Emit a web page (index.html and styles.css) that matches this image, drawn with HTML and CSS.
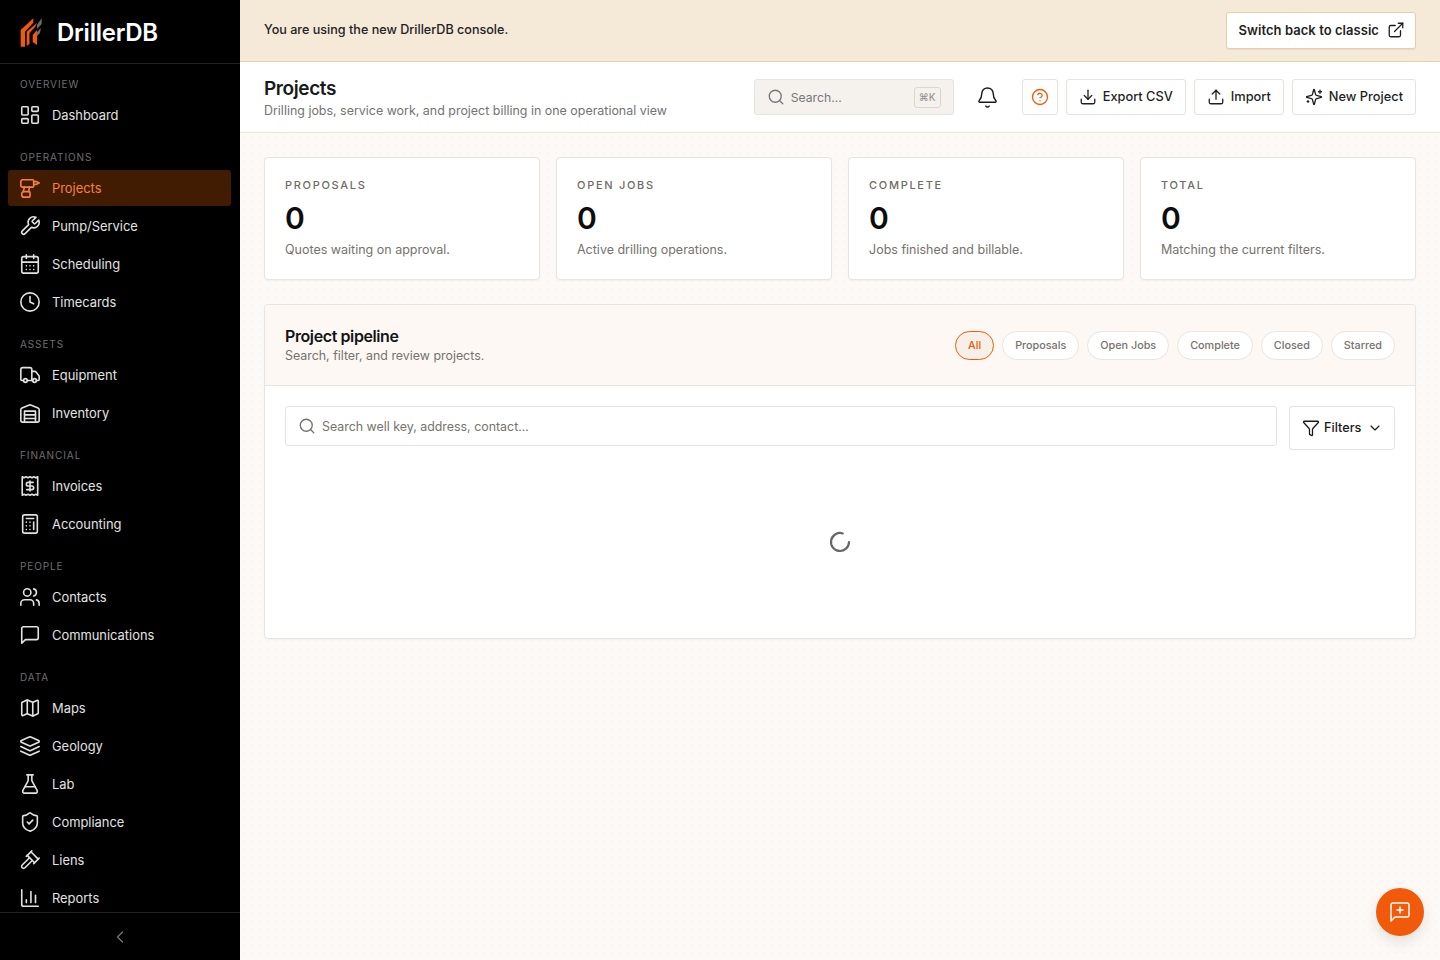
FILE: index.html
```html
<!DOCTYPE html>
<html lang="en">
<head>
    <meta charset="UTF-8">
    <title>Projects - DrillerDB</title>
    <link rel="stylesheet" href="styles.css">
</head>
<body>
    <aside class="sidebar">
        <div class="brand">
            <svg class="logo" viewBox="0 0 22 30">
                <path fill="#f05a0a" d="M.7 29.700V13L13.300 1.300v4.400L5 14.700v15z"/>
                <path fill="#f05a0a" d="M6.700 28.700V14.700L17 6l-2 4-5.500 6v11z"/>
                <path fill="#f05a0a" d="M12.700 25v-7L17 13v15z"/>
                <path fill="#6b6b6b" d="M17 8l4.700-7v6L17 12z"/>
                <path fill="#6b6b6b" d="M17 15l4-4-1 5-3 3z"/>
            </svg>
            <span class="brand-name">DrillerDB</span>
        </div>
        <nav class="nav">
            <div class="nav-label">OVERVIEW</div>
            <a class="nav-item"><svg class="icon" viewBox="0 0 24 24"><rect x="3" y="3" width="7" height="9" rx="1"/><rect x="14" y="3" width="7" height="5" rx="1"/><rect x="14" y="12" width="7" height="9" rx="1"/><rect x="3" y="16" width="7" height="5" rx="1"/></svg>Dashboard</a>

            <div class="nav-label">OPERATIONS</div>
            <a class="nav-item active"><svg class="icon" viewBox="0 0 24 24"><path d="M4 3h11a1 1 0 0 1 1 1v6a1 1 0 0 1-1 1H4a2 2 0 0 1-2-2V5a2 2 0 0 1 2-2z"/><path d="M16 5h3l3 1.500-3 1.500h-3"/><path d="M6 11l-1.500 5M11.500 11l-1 5"/><path d="M4.500 16H11a1 1 0 0 1 1 1v4a1 1 0 0 1-1 1H5.500A2.500 2.500 0 0 1 3 19.500v-1A2.500 2.500 0 0 1 4.500 16z"/></svg>Projects</a>
            <a class="nav-item"><svg class="icon" viewBox="0 0 24 24"><path d="M14.700 6.300a1 1 0 0 0 0 1.400l1.600 1.600a1 1 0 0 0 1.400 0l3.770-3.770a6 6 0 0 1-7.940 7.940l-6.910 6.910a2.120 2.120 0 0 1-3-3l6.910-6.910a6 6 0 0 1 7.940-7.940l-3.760 3.760z"/></svg>Pump/Service</a>
            <a class="nav-item"><svg class="icon" viewBox="0 0 24 24"><rect x="3" y="4" width="18" height="18" rx="2"/><path d="M16 2v4M8 2v4M3 10h18M8 14h.01M12 14h.01M16 14h.01M8 18h.01M12 18h.01M16 18h.01"/></svg>Scheduling</a>
            <a class="nav-item"><svg class="icon" viewBox="0 0 24 24"><circle cx="12" cy="12" r="10"/><path d="M12 6v6l4 2"/></svg>Timecards</a>

            <div class="nav-label">ASSETS</div>
            <a class="nav-item"><svg class="icon" viewBox="0 0 24 24"><path d="M14 18V6a2 2 0 0 0-2-2H4a2 2 0 0 0-2 2v11a1 1 0 0 0 1 1h2"/><path d="M15 18H9"/><path d="M19 18h2a1 1 0 0 0 1-1v-3.650a1 1 0 0 0-.22-.624l-3.480-4.350A1 1 0 0 0 17.520 8H14"/><circle cx="17" cy="18" r="2"/><circle cx="7" cy="18" r="2"/></svg>Equipment</a>
            <a class="nav-item"><svg class="icon" viewBox="0 0 24 24"><path d="M22 8.350V20a2 2 0 0 1-2 2H4a2 2 0 0 1-2-2V8.350A2 2 0 0 1 3.260 6.500l8-3.200a2 2 0 0 1 1.480 0l8 3.200A2 2 0 0 1 22 8.350Z"/><path d="M6 18h12M6 14h12"/><path d="M6 22V10h12v12"/></svg>Inventory</a>

            <div class="nav-label">FINANCIAL</div>
            <a class="nav-item"><svg class="icon" viewBox="0 0 24 24"><path d="M3.500 2v20l2.100-1 2.100 1 2.100-1 2.200 1 2.100-1 2.100 1 2.100-1 2.100 1V2l-2.100 1-2.100-1-2.100 1L12 2 9.800 3 7.700 2 5.600 3z"/><path d="M15.500 8H10a2 2 0 1 0 0 4h4a2 2 0 1 1 0 4H8.500"/><path d="M12 17.500v-11"/></svg>Invoices</a>
            <a class="nav-item"><svg class="icon" viewBox="0 0 24 24"><rect x="4" y="2" width="16" height="20" rx="2"/><path d="M8 6h8M16 10v8M8 10h.01M12 10h.01M8 14h.01M12 14h.01M8 18h.01M12 18h.01"/></svg>Accounting</a>

            <div class="nav-label">PEOPLE</div>
            <a class="nav-item"><svg class="icon" viewBox="0 0 24 24"><path d="M16 21v-2a4 4 0 0 0-4-4H6a4 4 0 0 0-4 4v2"/><circle cx="9" cy="7" r="4"/><path d="M22 21v-2a4 4 0 0 0-3-3.870"/><path d="M16 3.130a4 4 0 0 1 0 7.750"/></svg>Contacts</a>
            <a class="nav-item"><svg class="icon" viewBox="0 0 24 24"><path d="M21 15a2 2 0 0 1-2 2H7l-4 4V5a2 2 0 0 1 2-2h14a2 2 0 0 1 2 2z"/></svg>Communications</a>

            <div class="nav-label">DATA</div>
            <a class="nav-item"><svg class="icon" viewBox="0 0 24 24"><path d="M14.106 5.553a2 2 0 0 0 1.788 0l3.659-1.830A1 1 0 0 1 21 4.619v12.764a1 1 0 0 1-.553.894l-4.553 2.277a2 2 0 0 1-1.788 0l-4.212-2.106a2 2 0 0 0-1.788 0l-3.659 1.830A1 1 0 0 1 3 19.381V6.618a1 1 0 0 1 .553-.894l4.553-2.277a2 2 0 0 1 1.788 0z"/><path d="M15 5.764v15M9 3.236v15"/></svg>Maps</a>
            <a class="nav-item"><svg class="icon" viewBox="0 0 24 24"><path d="m12.830 2.180a2 2 0 0 0-1.660 0L2.600 6.080a1 1 0 0 0 0 1.830l8.580 3.910a2 2 0 0 0 1.660 0l8.580-3.900a1 1 0 0 0 0-1.830Z"/><path d="m22 17.650-9.170 4.160a2 2 0 0 1-1.660 0L2 17.650"/><path d="m22 12.650-9.170 4.160a2 2 0 0 1-1.660 0L2 12.650"/></svg>Geology</a>
            <a class="nav-item"><svg class="icon" viewBox="0 0 24 24"><path d="M14 2v6a2 2 0 0 0 .245.960l5.510 10.080A2 2 0 0 1 18 22H6a2 2 0 0 1-1.755-2.960l5.510-10.080A2 2 0 0 0 10 8V2"/><path d="M6.453 15h11.094"/><path d="M8.500 2h7"/></svg>Lab</a>
            <a class="nav-item"><svg class="icon" viewBox="0 0 24 24"><path d="M20 13c0 5-3.500 7.500-7.660 8.950a1 1 0 0 1-.670-.010C7.500 20.500 4 18 4 13V6a1 1 0 0 1 1-1c2 0 4.500-1.200 6.240-2.720a1.170 1.170 0 0 1 1.520 0C14.510 3.810 17 5 19 5a1 1 0 0 1 1 1z"/><path d="m9 12 2 2 4-4"/></svg>Compliance</a>
            <a class="nav-item"><svg class="icon" viewBox="0 0 24 24"><path d="m14.500 12.500-8 8a2.119 2.119 0 1 1-3-3l8-8"/><path d="m16 16 6-6"/><path d="m8 8 6-6"/><path d="m9 7 8 8"/><path d="m21 11-8-8"/></svg>Liens</a>
            <a class="nav-item"><svg class="icon" viewBox="0 0 24 24"><path d="M3 3v16a2 2 0 0 0 2 2h16"/><path d="M18 17V9M13 17V5M8 17v-3"/></svg>Reports</a>
        </nav>
        <div class="sidebar-foot">
            <svg class="icon" viewBox="0 0 24 24"><path d="m15 18-6-6 6-6"/></svg>
        </div>
    </aside>

    <div class="main">
        <div class="banner">
            <span class="banner-text">You are using the new DrillerDB console.</span>
            <button class="classic-btn">Switch back to classic
                <svg class="icon" viewBox="0 0 24 24"><path d="M15 3h6v6"/><path d="M10 14 21 3"/><path d="M18 13v6a2 2 0 0 1-2 2H5a2 2 0 0 1-2-2V8a2 2 0 0 1 2-2h6"/></svg>
            </button>
        </div>

        <header class="page-head">
            <div class="titles">
                <h1>Projects</h1>
                <p>Drilling jobs, service work, and project billing in one operational view</p>
            </div>
            <div class="head-actions">
                <div class="global-search">
                    <svg class="icon" viewBox="0 0 24 24"><circle cx="11" cy="11" r="8"/><path d="m21 21-4.300-4.300"/></svg>
                    <span class="global-search-text">Search...</span>
                    <span class="kbd">⌘K</span>
                </div>
                <button class="bell"><svg class="icon" viewBox="0 0 24 24"><path d="M10.268 21a2 2 0 0 0 3.464 0"/><path d="M3.262 15.326A1 1 0 0 0 4 17h16a1 1 0 0 0 .740-1.673C19.410 13.956 18 12.499 18 8A6 6 0 0 0 6 8c0 4.499-1.411 5.956-2.738 7.326"/></svg></button>
                <button class="btn help"><svg class="icon" viewBox="0 0 24 24"><circle cx="12" cy="12" r="10"/><path d="M9.090 9a3 3 0 0 1 5.830 1c0 2-3 3-3 3"/><path d="M12 17h.01"/></svg></button>
                <button class="btn"><svg class="icon" viewBox="0 0 24 24"><path d="M21 15v4a2 2 0 0 1-2 2H5a2 2 0 0 1-2-2v-4"/><path d="m7 10 5 5 5-5"/><path d="M12 15V3"/></svg>Export CSV</button>
                <button class="btn"><svg class="icon" viewBox="0 0 24 24"><path d="M21 15v4a2 2 0 0 1-2 2H5a2 2 0 0 1-2-2v-4"/><path d="m17 8-5-5-5 5"/><path d="M12 3v12"/></svg>Import</button>
                <button class="btn"><svg class="icon" viewBox="0 0 24 24"><path d="M9.937 15.500A2 2 0 0 0 8.500 14.063l-6.135-1.582a.5.5 0 0 1 0-.962L8.500 9.936A2 2 0 0 0 9.937 8.500l1.582-6.135a.5.5 0 0 1 .963 0L14.063 8.500A2 2 0 0 0 15.500 9.937l6.135 1.581a.5.5 0 0 1 0 .964L15.500 14.063a2 2 0 0 0-1.437 1.437l-1.582 6.135a.5.5 0 0 1-.963 0z"/><path d="M20 3v4M22 5h-4M4 17v2M5 18H3"/></svg>New Project</button>
            </div>
        </header>

        <main class="content">
            <section class="stats">
                <div class="stat">
                    <div class="stat-label">PROPOSALS</div>
                    <div class="stat-value">0</div>
                    <div class="stat-note">Quotes waiting on approval.</div>
                </div>
                <div class="stat">
                    <div class="stat-label">OPEN JOBS</div>
                    <div class="stat-value">0</div>
                    <div class="stat-note">Active drilling operations.</div>
                </div>
                <div class="stat">
                    <div class="stat-label">COMPLETE</div>
                    <div class="stat-value">0</div>
                    <div class="stat-note">Jobs finished and billable.</div>
                </div>
                <div class="stat">
                    <div class="stat-label">TOTAL</div>
                    <div class="stat-value">0</div>
                    <div class="stat-note">Matching the current filters.</div>
                </div>
            </section>

            <section class="pipeline">
                <div class="pipeline-head">
                    <div>
                        <h2>Project pipeline</h2>
                        <p>Search, filter, and review projects.</p>
                    </div>
                    <div class="tabs">
                        <button class="tab active">All</button>
                        <button class="tab">Proposals</button>
                        <button class="tab">Open Jobs</button>
                        <button class="tab">Complete</button>
                        <button class="tab">Closed</button>
                        <button class="tab">Starred</button>
                    </div>
                </div>
                <div class="pipeline-body">
                    <div class="filter-row">
                        <div class="well-search">
                            <svg class="icon" viewBox="0 0 24 24"><circle cx="11" cy="11" r="8"/><path d="m21 21-4.300-4.300"/></svg>
                            <span>Search well key, address, contact...</span>
                        </div>
                        <button class="filters">
                            <svg class="icon" viewBox="0 0 24 24"><path d="M10 20a1 1 0 0 0 .553.895l2 1A1 1 0 0 0 14 21v-7a2 2 0 0 1 .517-1.341L21.740 4.670A1 1 0 0 0 21 3H3a1 1 0 0 0-.742 1.670l7.225 7.989A2 2 0 0 1 10 14z"/></svg>
                            Filters
                            <svg class="icon chev" viewBox="0 0 24 24"><path d="m6 9 6 6 6-6"/></svg>
                        </button>
                    </div>
                    <div class="loading">
                        <svg class="icon spinner" viewBox="0 0 24 24"><path d="M21 12a9 9 0 1 1-6.219-8.560"/></svg>
                    </div>
                </div>
            </section>
        </main>
    </div>

    <button class="fab"><svg class="icon" viewBox="0 0 24 24"><path d="M21 15a2 2 0 0 1-2 2H7l-4 4V5a2 2 0 0 1 2-2h14a2 2 0 0 1 2 2z"/><path d="M12 7v6M9 10h6"/></svg></button>
</body>
</html>
```

FILE: styles.css
```css
* {
    margin: 0;
    padding: 0;
    box-sizing: border-box;
}
body {
    display: flex;
    height: 100vh;
    overflow: hidden;
    font-family: Inter, "Liberation Sans", sans-serif;
    font-size: 13px;
    color: #1a1a1a;
    background-color: #fdf9f6;
}
button {
    font-family: inherit;
    background: none;
    border: none;
}
.icon {
    width: 18px;
    height: 18px;
    flex: none;
    fill: none;
    stroke: currentColor;
    stroke-width: 1.75;
    stroke-linecap: round;
    stroke-linejoin: round;
}

/* sidebar */
.sidebar {
    width: 240px;
    flex: none;
    display: flex;
    flex-direction: column;
    height: 100%;
    background-color: #000;
    color: #e2e2e2;
}
.brand {
    height: 64px;
    flex: none;
    display: flex;
    align-items: center;
    gap: 15px;
    padding-left: 20px;
    border-bottom: 1px solid #222;
}
.logo {
    width: 22px;
    height: 30px;
}
.brand-name {
    padding-top: 2px;
    color: #fff;
    font-size: 24px;
    font-weight: 600;
    letter-spacing: -0.25px;
}
.nav {
    flex: 1;
    min-height: 0;
    overflow: hidden;
    padding: 12px 9px 0 8px;
}
.nav-label {
    height: 16px;
    line-height: 16px;
    margin: 16px 0 5px 12px;
    font-size: 10px;
    letter-spacing: 0.9px;
    color: #6e6e6e;
}
.nav-label:first-child {
    margin-top: 0;
}
.nav-item {
    display: flex;
    align-items: center;
    gap: 11px;
    height: 36px;
    margin-bottom: 2px;
    padding-left: 11px;
    border-radius: 3px;
    font-size: 12.9px;
}
.nav-item .icon {
    width: 22px;
    height: 22px;
}
.nav-item.active {
    background-color: #411c03;
    color: #f8803e;
}
.sidebar-foot {
    height: 48px;
    flex: none;
    display: flex;
    align-items: center;
    justify-content: center;
    border-top: 1px solid #222;
    color: #777;
}
.sidebar-foot .icon {
    width: 20px;
    height: 20px;
    stroke-width: 1.5;
}

/* main column */
.main {
    flex: 1;
    min-width: 0;
    display: flex;
    flex-direction: column;
}
.banner {
    height: 62px;
    flex: none;
    display: flex;
    align-items: center;
    justify-content: space-between;
    padding: 0 24px;
    background-color: #f5e9d8;
    border-bottom: 1px solid #e8d2ae;
    font-size: 12.6px;
    font-weight: 500;
    color: #232323;
}
.banner-text {
    padding-bottom: 3px;
}
.classic-btn {
    display: flex;
    align-items: center;
    gap: 8px;
    height: 37px;
    padding: 0 10px 2px 12px;
    background-color: #fff;
    border: 1px solid #e8cfa5;
    border-radius: 3px;
    font-size: 13px;
    font-weight: 600;
    letter-spacing: 0.05px;
    color: #1f1f1f;
    box-shadow: 0 1px 1px rgba(0, 0, 0, 0.06);
}
.page-head {
    height: 71px;
    flex: none;
    display: flex;
    align-items: center;
    justify-content: space-between;
    padding: 0 24px;
    background-color: #fff;
    border-bottom: 1px solid #e8e4df;
}
.titles {
    padding-top: 2px;
}
.titles h1 {
    margin-top: 1px;
    font-size: 19px;
    line-height: 24px;
    font-weight: 600;
    letter-spacing: -0.4px;
    color: #1a1a1a;
}
.titles p {
    margin-top: 1px;
    font-size: 12.45px;
    line-height: 18px;
    color: #737373;
}
.head-actions {
    display: flex;
    align-items: center;
    gap: 8px;
}
.global-search {
    display: flex;
    align-items: center;
    gap: 6px;
    width: 200px;
    height: 36px;
    padding: 0 12px;
    background-color: #f5f1ed;
    border: 1px solid #e6e2de;
    border-radius: 3px;
    font-size: 12.2px;
    color: #777;
}
.global-search-text {
    flex: 1;
}
.kbd {
    display: flex;
    align-items: center;
    justify-content: center;
    width: 27px;
    height: 21px;
    border: 1px solid #d9d5d0;
    border-radius: 3px;
    font-size: 10px;
    color: #8d8d8d;
}
.bell {
    display: flex;
    align-items: center;
    justify-content: center;
    width: 36px;
    height: 36px;
    margin: 0 8px;
    color: #1a1a1a;
}
.bell .icon {
    width: 23px;
    height: 23px;
    stroke-width: 1.5;
}
.btn {
    display: flex;
    align-items: center;
    gap: 6px;
    height: 36px;
    padding: 0 12px 1px 12px;
    background-color: #fff;
    border: 1px solid #e6e2de;
    border-radius: 3px;
    font-size: 12.8px;
    font-weight: 500;
    color: #1f1f1f;
}
.help {
    width: 36px;
    padding: 0;
    justify-content: center;
    color: #f05a0a;
}

/* page body */
.content {
    flex: 1;
    padding: 24px;
    background-color: #fdf9f6;
    background-image: radial-gradient(#faf5ef 1px, transparent 1px);
    background-size: 8px 8px;
}
.stats {
    display: grid;
    grid-template-columns: repeat(4, 1fr);
    gap: 16px;
    margin-bottom: 24px;
}
.stat {
    height: 123px;
    padding: 20px 20px 0 20px;
    background-color: #fff;
    border: 1px solid #e8e4df;
    border-radius: 4px;
    box-shadow: 0 1px 2px rgba(0, 0, 0, 0.04);
}
.stat-label {
    line-height: 14px;
    font-size: 11px;
    font-weight: 500;
    letter-spacing: 1.7px;
    color: #6f6b66;
}
.stat-value {
    margin-top: 8px;
    line-height: 36px;
    font-size: 30px;
    font-weight: 600;
    color: #0d0d0d;
}
.stat-note {
    margin-top: 5px;
    font-size: 12.5px;
    line-height: 18px;
    color: #76726d;
}
.pipeline {
    background-color: #fff;
    border: 1px solid #e8e4df;
    border-radius: 4px;
    box-shadow: 0 1px 2px rgba(0, 0, 0, 0.04);
    overflow: hidden;
}
.pipeline-head {
    height: 81px;
    display: flex;
    align-items: center;
    justify-content: space-between;
    padding: 0 20px;
    background-color: #fdf8f4;
    border-bottom: 1px solid #e8e4df;
}
.pipeline-head h2 {
    padding-top: 1px;
    font-size: 16px;
    line-height: 20px;
    font-weight: 600;
    letter-spacing: -0.4px;
    color: #141414;
}
.pipeline-head p {
    margin-top: 1px;
    font-size: 12.4px;
    line-height: 18px;
    color: #76726d;
}
.tabs {
    display: flex;
    gap: 8px;
}
.tab {
    height: 29px;
    padding: 0 12px;
    background-color: #fff;
    border: 1px solid #e8e4df;
    border-radius: 15px;
    font-size: 10.8px;
    font-weight: 500;
    color: #76726d;
}
.tab.active {
    background-color: #f6f0e9;
    border-color: #f05a0a;
    color: #f05a0a;
}
.pipeline-body {
    height: 252px;
    padding: 20px;
}
.filter-row {
    display: flex;
    gap: 12px;
    align-items: flex-start;
}
.well-search {
    flex: 1;
    display: flex;
    align-items: center;
    gap: 6px;
    height: 40px;
    padding: 0 12px;
    border: 1px solid #e6e2de;
    border-radius: 3px;
    font-size: 12.4px;
    color: #76726d;
}
.filters {
    display: flex;
    align-items: center;
    gap: 4px;
    height: 44px;
    width: 106px;
    padding: 0 12px 1px 12px;
    border: 1px solid #e6e2de;
    border-radius: 3px;
    font-size: 12.7px;
    font-weight: 500;
    color: #1a1a1a;
}
.filters .chev {
    margin-left: 2px;
    width: 16px;
    height: 16px;
}
.loading {
    display: flex;
    justify-content: center;
    margin-top: 80px;
    color: #666;
}
.spinner {
    width: 24px;
    height: 24px;
    stroke-width: 2.2;
}
.fab {
    position: fixed;
    right: 16px;
    bottom: 24px;
    width: 48px;
    height: 48px;
    display: flex;
    align-items: center;
    justify-content: center;
    border-radius: 50%;
    background-color: #f05a0a;
    color: #fff;
    box-shadow: 0 6px 14px rgba(0, 0, 0, 0.1);
}
.fab .icon {
    width: 24px;
    height: 24px;
    stroke-width: 1.5;
}
```
